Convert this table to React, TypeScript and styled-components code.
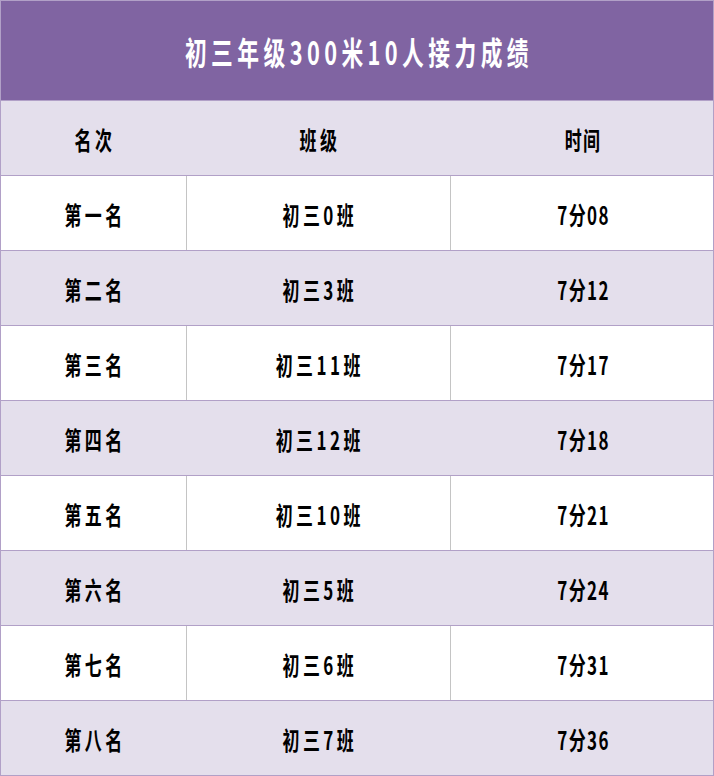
import React from "react";
import styled, { createGlobalStyle } from "styled-components";

const Global = createGlobalStyle`
  html, body { margin: 0; padding: 0; background: #ffffff; }
  body { font-family: "Noto Sans CJK SC", "Noto Sans", sans-serif; }
`;

const BORDER = "#b1a0c7";

const Sheet = styled.div`
  width: 714px;
  height: 776px;
  box-sizing: border-box;
  border: 1px solid ${BORDER};
  display: flex;
  flex-direction: column;
  background: #ffffff;
`;

const TitleBar = styled.div`
  height: 99px;
  background: #8064a2;
  border-bottom: 1px solid ${BORDER};
  display: flex;
  align-items: center;
  justify-content: center;
  padding-left: 4px;
`;

const Condensed = styled.span<{ $size: number; $spacing: number; $color: string }>`
  display: inline-block;
  font-family: "Noto Sans CJK SC", "Noto Sans", sans-serif;
  font-weight: 700;
  font-size: ${(p) => p.$size}px;
  letter-spacing: ${(p) => p.$spacing}px;
  color: ${(p) => p.$color};
  line-height: 1;
  white-space: nowrap;
  transform: scaleX(0.68);
  transform-origin: center;
`;

const Row = styled.div<{ $shaded: boolean }>`
  height: 74px;
  display: grid;
  grid-template-columns: 185px 264px 263px;
  background: ${(p) => (p.$shaded ? "#e4dfec" : "#ffffff")};
  border-bottom: 1px solid ${BORDER};
  &:last-child {
    border-bottom: none;
  }
`;

const Cell = styled.div<{ $divider: boolean }>`
  display: flex;
  align-items: center;
  justify-content: center;
  padding-top: 3px;
  padding-left: 3px;
  box-sizing: border-box;
  border-left: 1px solid ${(p) => (p.$divider ? "#c4c4c4" : "transparent")};
  &:first-child {
    border-left: none;
  }
`;

const rows: [string, string, string][] = [
  ["第一名", "初三0班", "7分08"],
  ["第二名", "初三3班", "7分12"],
  ["第三名", "初三11班", "7分17"],
  ["第四名", "初三12班", "7分18"],
  ["第五名", "初三10班", "7分21"],
  ["第六名", "初三5班", "7分24"],
  ["第七名", "初三6班", "7分31"],
  ["第八名", "初三7班", "7分36"],
];

const TableRow: React.FC<{ cells: string[]; shaded: boolean }> = ({ cells, shaded }) => (
  <Row $shaded={shaded}>
    {cells.map((c, i) => (
      <Cell key={i} $divider={!shaded}>
        <Condensed $size={25} $spacing={i === 2 ? 2 : 5} $color="#000000">
          {c}
        </Condensed>
      </Cell>
    ))}
  </Row>
);

export default function App() {
  return (
    <>
      <Global />
      <Sheet>
        <TitleBar>
          <Condensed $size={32} $spacing={6.5} $color="#ffffff">
            初三年级300米10人接力成绩
          </Condensed>
        </TitleBar>
        <TableRow cells={["名次", "班级", "时间"]} shaded={true} />
        {rows.map((r, i) => (
          <TableRow key={i} cells={r} shaded={i % 2 === 1} />
        ))}
      </Sheet>
    </>
  );
}
